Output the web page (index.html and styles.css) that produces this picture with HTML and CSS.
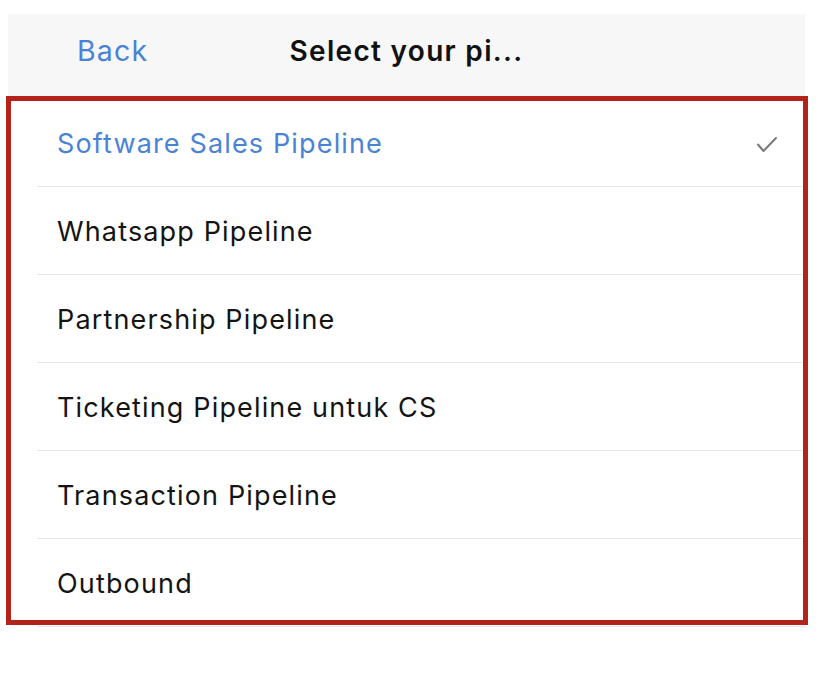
FILE: index.html
```html
<!DOCTYPE html>
<html>
<head>
<meta charset="utf-8">
<link rel="stylesheet" href="styles.css">
</head>
<body>
<div class="screen">
  <header class="navbar">
    <span class="back">Back</span>
    <span class="title">Select your pi...</span>
    <span class="spacer"></span>
  </header>
  <ul class="list">
    <li class="row selected"><span class="label">Software Sales Pipeline</span>
      <svg class="check" width="22" height="18" viewBox="0 0 22 18"><path d="M2 8.5 L7.5 15 L20 2" fill="none" stroke="#7a7a7a" stroke-width="2" stroke-linecap="round" stroke-linejoin="round"/></svg>
    </li>
    <li class="row"><span class="label">Whatsapp Pipeline</span></li>
    <li class="row"><span class="label">Partnership Pipeline</span></li>
    <li class="row"><span class="label">Ticketing Pipeline untuk CS</span></li>
    <li class="row"><span class="label">Transaction Pipeline</span></li>
    <li class="row"><span class="label">Outbound</span></li>
  </ul>
  <div class="highlight"></div>
</div>
</body>
</html>
```
FILE: styles.css
```css
html, body {
  margin: 0;
  padding: 0;
  background: #ffffff;
}
body {
  font-family: Inter, "Noto Sans", "Liberation Sans", sans-serif;
  color: #141414;
}
.screen {
  position: relative;
  width: 797px;
  margin: 14px 0 0 8px;
}
.navbar {
  height: 82px;
  background: #f7f7f7;
  display: grid;
  grid-template-columns: 1fr auto 1fr;
  align-items: center;
}
.back {
  padding-left: 69px;
  font-size: 28.5px;
  color: #4a83d5;
  letter-spacing: 1.2px;
  padding-bottom: 9px;
}
.title {
  font-size: 28px;
  font-weight: 600;
  color: #111111;
  letter-spacing: 1.3px;
  padding-bottom: 9px;
}
.list {
  list-style: none;
  margin: 0;
  padding: 3px 0 0 0;
}
.row {
  margin-left: 29px;
  height: 87px;
  border-bottom: 1px solid #e6e6e6;
  display: flex;
  align-items: center;
  justify-content: space-between;
  padding-left: 20px;
  padding-right: 27px;
}
.label {
  font-size: 27px;
  letter-spacing: 1.15px;
  padding-top: 1px;
}
.selected .label {
  color: #4a83d5;
}
.check {
  display: block;
  margin-top: 4px;
}
.highlight {
  position: absolute;
  left: -2px;
  top: 82px;
  width: 792px;
  height: 519px;
  border: 5px solid #b3231a;
  pointer-events: none;
}
```
